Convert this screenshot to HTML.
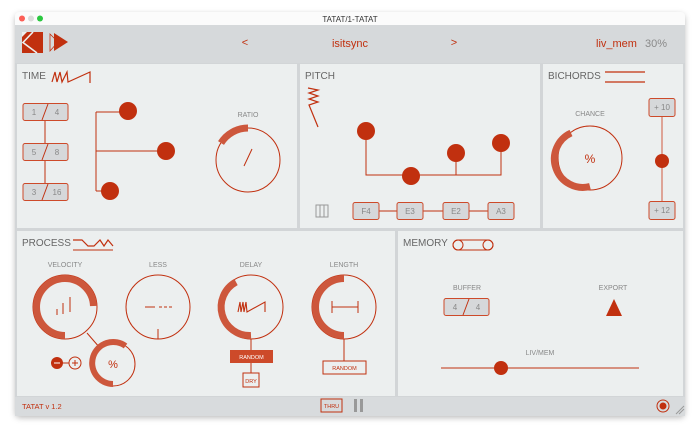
<!DOCTYPE html><html><head><style>body{margin:0;width:700px;height:434px;background:#fff;overflow:hidden;font-family:"Liberation Sans",sans-serif}</style></head><body>
<svg width="700" height="434" viewBox="0 0 700 434" xmlns="http://www.w3.org/2000/svg" font-family="Liberation Sans, sans-serif">
<defs><filter id="sh" x="-5%" y="-5%" width="110%" height="115%"><feDropShadow dx="0" dy="2" stdDeviation="3" flood-opacity="0.25"/></filter></defs>
<rect x="15" y="12" width="670" height="404" rx="5" fill="#d2d5d7" filter="url(#sh)"/>
<rect x="15" y="12" width="670" height="13" rx="4" fill="#fbfbfb"/>
<rect x="15" y="20" width="670" height="5" fill="#fbfbfb"/>
<circle cx="22" cy="18.5" r="3" fill="#fc5f57"/><circle cx="31" cy="18.5" r="3" fill="#dcdcdc"/><circle cx="40" cy="18.5" r="3" fill="#2bc840"/>
<text x="350" y="22" font-size="8" fill="#333" text-anchor="middle">TATAT/1-TATAT</text>
<rect x="15" y="25" width="670" height="38" fill="#d6d9db"/>
<!-- logo -->
<rect x="22" y="32" width="21" height="21" fill="#c1300f"/>
<path d="M33 32 L23 42.5 L37 53" fill="none" stroke="#eef0f0" stroke-width="1.6"/>
<path d="M22 32 L27 32 L22 37 Z" fill="#eef0f0"/>
<path d="M50 34 L58 42 L50 51 Z" fill="none" stroke="#c1300f" stroke-width="0.8"/><path d="M54 33 L68 42 L54 51 Z" fill="#c1300f"/>
<g fill="#c1300f" font-size="11"><text x="245" y="46" text-anchor="middle">&lt;</text><text x="350" y="47" text-anchor="middle">isitsync</text><text x="454" y="46" text-anchor="middle">&gt;</text><text x="596" y="47">liv_mem</text></g>
<text x="645" y="47" font-size="11" fill="#8a8a8a">30%</text>
<!-- panels -->
<g fill="#ecefef"><rect x="17" y="64" width="280" height="164"/><rect x="300" y="64" width="240" height="164"/><rect x="543" y="64" width="140" height="164"/><rect x="17" y="231" width="378" height="165"/><rect x="398" y="231" width="285" height="165"/></g>
<rect x="15" y="397" width="670" height="19" fill="#d8dbdd"/>
<g fill="#666" font-size="10"><text x="22" y="79">TIME</text><text x="305" y="79">PITCH</text><text x="548" y="79">BICHORDS</text><text x="22" y="246">PROCESS</text><text x="403" y="246">MEMORY</text></g>
<g fill="#888" font-size="7" text-anchor="middle"><text x="248" y="117">RATIO</text><text x="590" y="116">CHANCE</text><text x="65" y="267">VELOCITY</text><text x="158" y="267">LESS</text><text x="251" y="267">DELAY</text><text x="344" y="267">LENGTH</text><text x="467" y="290">BUFFER</text><text x="613" y="290">EXPORT</text><text x="540" y="355">LIV/MEM</text></g>
<g stroke="#c1300f" fill="none" stroke-width="1">
<path d="M52 82 L55 72 L57 82 L60 72 L62 82 L67 72 L68 82 L90 72 L90 83" stroke-width="1.2"/>
<line x1="45" y1="120" x2="45" y2="183"/>
<line x1="96" y1="112" x2="96" y2="191"/><line x1="96" y1="112" x2="128" y2="112"/><line x1="96" y1="151" x2="166" y2="151"/><line x1="96" y1="191" x2="110" y2="191"/>
<circle cx="248" cy="160" r="32"/>
<path d="M221 143 A32 32 0 0 1 248 128" stroke-width="7" stroke="#cd573c"/>
<line x1="244" y1="166" x2="252" y2="149"/>
<path d="M308 88 L318 90 L309 93 L318 96 L309 99 L318 102 L309 105 L318 127" stroke-width="1.2"/>
<path d="M366 131 V175 H501 V143 M456 153 V175"/>
<line x1="379" y1="211" x2="397" y2="211"/><line x1="423" y1="211" x2="443" y2="211"/><line x1="469" y1="211" x2="488" y2="211"/>
<line x1="605" y1="72" x2="645" y2="72" stroke-width="1.3"/><line x1="605" y1="82" x2="645" y2="82" stroke-width="1.3"/>
<circle cx="590" cy="158" r="32"/>
<path d="M571 133 A28.5 28.5 0 0 0 590 186.5" stroke-width="7" stroke="#cd573c"/>
<line x1="662" y1="116" x2="662" y2="201" stroke="#d05a3f"/>
<path d="M73 240 H82 L88 246 H94 L100 240 L104 246 L108 240 L113 246" stroke-width="1.2"/><line x1="73" y1="250" x2="113" y2="250"/>
<circle cx="65" cy="307" r="32"/><circle cx="158" cy="307" r="32"/><circle cx="251" cy="307" r="32"/><circle cx="344" cy="307" r="32"/>
<path d="M93.5 306 A28.5 28.5 0 1 0 65 335.5" stroke-width="7" stroke="#cd573c"/>
<path d="M236 282 A28.5 28.5 0 0 0 251 335.5" stroke-width="7" stroke="#cd573c"/>
<path d="M344 278.5 A28.5 28.5 0 0 0 344 335.5" stroke-width="7" stroke="#cd573c"/>
<path d="M57 315 V309 M63 314 V303 M70 312 V297"/>
<path d="M145 307 H155 M159 307 H162 M164 307 H167 M169 307 H172 M158 339 V329"/>
<path d="M238 312 L240 302 L241 312 L243 302 L244 312 L246 302 L247 312 L265 302 V312" stroke-width="1.1"/>
<path d="M332 301 V313 M332 307 H358 M358 301 V313"/>
<line x1="87" y1="333" x2="100" y2="348"/>
<circle cx="113" cy="364" r="22"/>
<path d="M125.5 346 A21 21 0 1 0 113 384" stroke-width="6" stroke="#cd573c"/>
<circle cx="75" cy="363" r="6"/><line x1="63" y1="363" x2="69" y2="363"/><path d="M72 363 H78 M75 360 V366"/>
<line x1="251" y1="339" x2="251" y2="373"/><line x1="344" y1="339" x2="344" y2="361"/>
<rect x="243" y="373" width="16" height="14"/><rect x="323" y="361" width="43" height="13"/>
<rect x="453" y="240" width="40" height="10" rx="5"/><circle cx="458" cy="245" r="5"/><circle cx="488" cy="245" r="5"/>
<line x1="441" y1="368" x2="639" y2="368"/>
<rect x="321" y="399" width="21" height="13"/>
<circle cx="663" cy="406" r="6"/>
</g>
<circle cx="128" cy="111" r="9" fill="#c1300f"/><circle cx="166" cy="151" r="9" fill="#c1300f"/><circle cx="110" cy="191" r="9" fill="#c1300f"/>
<circle cx="366" cy="131" r="9" fill="#c1300f"/><circle cx="411" cy="176" r="9" fill="#c1300f"/><circle cx="456" cy="153" r="9" fill="#c1300f"/><circle cx="501" cy="143" r="9" fill="#c1300f"/>
<circle cx="662" cy="161" r="7" fill="#c1300f"/><circle cx="501" cy="368" r="7" fill="#c1300f"/><circle cx="663" cy="406" r="3.5" fill="#c1300f"/>
<circle cx="57" cy="363" r="6" fill="#c1300f"/><line x1="54" y1="363" x2="60" y2="363" stroke="#fff"/>
<path d="M606 316 L622 316 L614 299 Z" fill="#c1300f"/>
<rect x="230" y="350" width="43" height="13" fill="#cd4a2a"/>
<g fill="#c1300f" font-size="5.5" text-anchor="middle"><text x="251.5" y="359" fill="#fff">RANDOM</text><text x="251" y="383">DRY</text><text x="344.5" y="370">RANDOM</text><text x="331.5" y="408">THRU</text></g>
<g fill="#c1300f" font-size="12" text-anchor="middle"><text x="590" y="163">%</text><text x="113" y="368" font-size="11">%</text></g>
<g fill="#d6d8da" stroke="#cd4a2a" stroke-width="1">
<rect x="23" y="103.5" width="45" height="17" rx="2"/><rect x="23" y="143.5" width="45" height="17" rx="2"/><rect x="23" y="183.5" width="45" height="17" rx="2"/>
<rect x="353" y="202.5" width="26" height="17" rx="2"/><rect x="397" y="202.5" width="26" height="17" rx="2"/><rect x="443" y="202.5" width="26" height="17" rx="2"/><rect x="488" y="202.5" width="26" height="17" rx="2"/>
<rect x="649" y="98.5" width="26" height="18" rx="2"/><rect x="649" y="201.5" width="26" height="18" rx="2"/>
<rect x="444" y="298.5" width="45" height="17" rx="2"/>
</g>
<g stroke="#c1300f"><line x1="42" y1="120" x2="48" y2="104"/><line x1="42" y1="160" x2="48" y2="144"/><line x1="42" y1="200" x2="48" y2="184"/><line x1="463" y1="315" x2="469" y2="299"/></g>
<g fill="#888" font-size="8" text-anchor="middle"><text x="34" y="115">1</text><text x="57" y="115">4</text><text x="34" y="155">5</text><text x="57" y="155">8</text><text x="34" y="195">3</text><text x="57" y="195">16</text><text x="455" y="310">4</text><text x="478" y="310">4</text>
<text x="366" y="214">F4</text><text x="410" y="214">E3</text><text x="456" y="214">E2</text><text x="501" y="214">A3</text><text x="662" y="110">+ 10</text><text x="662" y="213">+ 12</text></g>
<rect x="316" y="205" width="12" height="12" fill="none" stroke="#999"/><g stroke="#999"><line x1="320" y1="205" x2="320" y2="217"/><line x1="324" y1="205" x2="324" y2="217"/></g>
<text x="22" y="409" font-size="7.5" fill="#c1300f">TATAT v 1.2</text>
<rect x="354" y="399" width="3" height="13" fill="#999"/><rect x="360" y="399" width="3" height="13" fill="#999"/>
<g stroke="#999"><line x1="676" y1="414" x2="684" y2="406"/><line x1="679" y1="414" x2="684" y2="409"/></g>
</svg></body></html>
